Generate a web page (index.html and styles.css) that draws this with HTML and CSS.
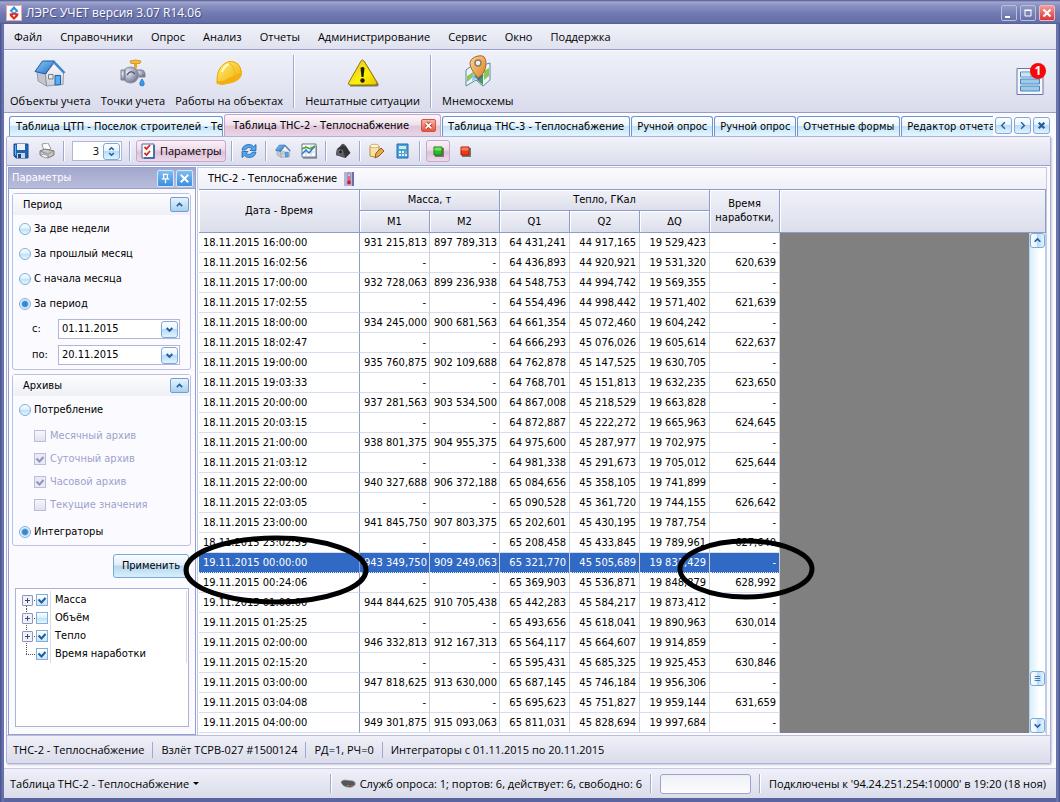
FILE: index.html
```html
<!DOCTYPE html>
<html lang="ru">
<head>
  <meta charset="UTF-8" />
  <meta name="viewport" content="width=device-width, initial-scale=1.0"/>
  <title>ЛЭРС УЧЕТ</title>
  <link rel="stylesheet" href="styles.css">
</head>
<body>
  <svg width="0" height="0" class="defs" aria-hidden="true">
    <defs>
      <linearGradient id="gBlue" x1="0" y1="0" x2="1" y2="1"><stop offset="0" stop-color="#8cc8f6"/><stop offset="1" stop-color="#1f6fc6"/></linearGradient>
      <linearGradient id="gWall" x1="0" y1="0" x2="0" y2="1"><stop offset="0" stop-color="#ffffff"/><stop offset="1" stop-color="#c9ccd3"/></linearGradient>
      <linearGradient id="gYellow" x1="0" y1="0" x2="1" y2="1"><stop offset="0" stop-color="#fff27a"/><stop offset="1" stop-color="#f2a900"/></linearGradient>
      <linearGradient id="gWarn" x1="0" y1="0" x2="1" y2="1"><stop offset="0" stop-color="#e0b93c"/><stop offset="0.6" stop-color="#fff200"/><stop offset="1" stop-color="#e5c000"/></linearGradient>
      <radialGradient id="gMetal" cx="0.35" cy="0.35" r="0.7"><stop offset="0" stop-color="#eef0f8"/><stop offset="1" stop-color="#6f7591"/></radialGradient>
      <linearGradient id="gPin" x1="0" y1="0" x2="1" y2="1"><stop offset="0" stop-color="#ffd79a"/><stop offset="1" stop-color="#d9831f"/></linearGradient>
      <symbol id="house" viewBox="0 0 32 28">
        <path d="M3 12 11.500 14 12.500 27 4 22z" fill="#c3c6ce" stroke="#888c96" stroke-width="0.800"/>
        <path d="M11.500 15 20 4.500 29.500 14 29 25.500 12.500 27z" fill="url(#gWall)" stroke="#888c96" stroke-width="0.800"/>
        <path d="M1 12.500 8.500 2 20.500 2 11.500 15z" fill="url(#gBlue)" stroke="#1c5ca6"/>
        <path d="M20 3 30.500 14" fill="none" stroke="#3c86cf" stroke-width="2.500"/>
        <path d="M14.500 15.500h4.500v4.500h-4.500z" fill="#e9eaec" stroke="#7b7e85"/>
        <path d="M21 16.500h5.500v9L21 26z" fill="#5aadf2" stroke="#1b62b0"/>
      </symbol>
    </defs>
  </svg>

  <div class="window">
    <header class="titlebar">
      <svg class="app-icon" viewBox="0 0 16 16"><rect width="16" height="16" fill="#fff"/><path d="M8 1 12.500 6 8 9 3.500 6z" fill="#2b93e6"/><path d="M3.500 8.500 8 8l4.500.500L12 11 8 15 4 11z" fill="#dc2a1c"/><path d="M6 6l2-1.500L10 6 8 7.500zM6.500 10.500 8 9.500l1.500 1L8 12z" fill="#fff"/><path d="M.5.5h15v15H.5z" fill="none" stroke="#f0a5a0"/></svg>
      <h1>ЛЭРС УЧЕТ версия 3.07 R14.06</h1>
      <div class="win-buttons">
        <button aria-label="Свернуть"><svg viewBox="0 0 14 14"><path d="M3 10h5v2H3z" fill="#fff"/></svg></button>
        <button aria-label="Развернуть"><svg viewBox="0 0 14 14"><path d="M4 4.500h6V10H4z" fill="none" stroke="#fff"/><path d="M3.500 3.500h7v1.500h-7z" fill="#fff"/></svg></button>
        <button class="close" aria-label="Закрыть"><svg viewBox="0 0 14 14"><path d="M3.500 3.500l7 7M10.500 3.500l-7 7" stroke="#fff" stroke-width="2.200"/></svg></button>
      </div>
    </header>

    <div class="client">
      <nav class="menubar">
        <button>Файл</button>
        <button>Справочники</button>
        <button>Опрос</button>
        <button>Анализ</button>
        <button>Отчеты</button>
        <button>Администрирование</button>
        <button>Сервис</button>
        <button>Окно</button>
        <button>Поддержка</button>
      </nav>

      <div class="toolbar">
        <button><svg width="32" height="28"><use href="#house"/></svg>Объекты учета</button>
        <button>
          <svg width="32" height="28" viewBox="0 0 32 28"><path d="M13 2q5.500-2 11 0l-1 2.500h-9z" fill="#f7b940" stroke="#d08a1a" stroke-width="0.800"/><path d="M17 4.500h3v5h-3z" fill="#e9a52c"/><path d="M16 11h8q4 0 4 5v2h-6v-2h-6z" fill="url(#gMetal)" stroke="#7d829c"/><circle cx="13.500" cy="16" r="8" fill="url(#gMetal)" stroke="#8a8fab"/><path d="M4 11h4v10H4z" fill="url(#gMetal)" stroke="#7d829c"/><path d="M10 16q4-6 8-1" fill="none" stroke="#5a5f7c" stroke-width="1.500"/><path d="M25 20q3 4 2 6-2 2-4 0-1-2 2-6z" fill="#38a0f0" stroke="#1b6fc9" stroke-width="0.800"/></svg>
          Точки учета</button>
        <button>
          <svg width="32" height="28" viewBox="0 0 32 28"><path d="M4 19Q5 6 16 2.500q11-1 12.500 11l-1 4-14 7q-6 2-9-1z" fill="url(#gYellow)" stroke="#e9a700"/><path d="M3 22q6 1 11-2t13-6l2 2q-3 6-10 8T4 25z" fill="#f5ae12"/><path d="M15 4q7 2 7 12" fill="none" stroke="#f3b80e"/><path d="M9 13q2-6 7-8" fill="none" stroke="#fffbcf" stroke-width="2"/></svg>
          Работы на объектах</button>
        <span class="sep"></span>
        <button>
          <svg width="32" height="28" viewBox="0 0 32 28"><path d="M3 26.500 15 3q1.500-2 3 0l13.500 22q.500 2.500-2 2.500H4q-2 0-1-1z" fill="#75776d"/><path d="M1.500 24 14 2q1.500-2 3 0L30 23.500q0 2.500-2 2.500H3.500q-2.500 0-2-2z" fill="url(#gWarn)" stroke="#96760c"/><path d="M13.500 9q2-2 4 0l-1 9h-2z" fill="#1d1d14"/><circle cx="15.500" cy="21.500" r="2.200" fill="#1d1d14"/></svg>
          Нештатные ситуации</button>
        <span class="sep"></span>
        <button>
          <svg width="32" height="32" viewBox="0 0 32 32"><path d="M4 15 11 10 16 14 21 10 28 8V25L21 31 14 25 4 31z" fill="#eef5fa" stroke="#5b88ad"/><path d="M5 21l6-4v5l-6 5zM22 16l5-3v8l-5 4z" fill="#8cc657"/><path d="M11 18l5 2v6l-2-2-4 2z" fill="#8dc8ed"/><path d="M16 22l5-4v12l-6-5z" fill="#4b9a51"/><path d="M12 21l5 4 5-5" fill="#356fa3"/><path d="M16 23Q8 14 8 8.500T16 1t8 7.500T16 23z" fill="url(#gPin)" stroke="#a9672a"/><circle cx="16" cy="8" r="3" fill="#eef1f6" stroke="#8c7c65" stroke-width="1.500"/></svg>
          Мнемосхемы</button>
        <button class="notify" aria-label="Уведомления">
          <svg width="30" height="30" viewBox="0 0 30 30"><path d="M2 1.500h26v26H2z" fill="#f6f7fc" stroke="#6a76ad"/><path d="M5.500 5h19v5h-19zM5.500 12h19v5h-19zM5.500 19h19v5h-19z" fill="#9ccbe9" stroke="#4684c0"/><path d="M6 5.500h9v4H6z" fill="#c5e4f4"/></svg>
          <span class="badge">1</span>
        </button>
      </div>

      <div class="tabs">
        <div class="tab-list" role="tablist">
          <button class="tab cut" role="tab">Таблица ЦТП - Поселок строителей - Те</button>
          <div class="tab active"><button role="tab" aria-selected="true">Таблица ТНС-2 - Теплоснабжение</button><button class="tab-close" aria-label="Закрыть вкладку"><svg viewBox="0 0 14 12"><path d="M4 3l6 6M10 3l-6 6" stroke="#c33a2c" stroke-width="4"/><path d="M4 3l6 6M10 3l-6 6" stroke="#fff" stroke-width="2"/></svg></button></div>
          <button class="tab" role="tab">Таблица ТНС-3 - Теплоснабжение</button>
          <button class="tab" role="tab">Ручной опрос</button>
          <button class="tab" role="tab">Ручной опрос</button>
          <button class="tab" role="tab">Отчетные формы</button>
          <button class="tab" role="tab">Редактор отчета</button>
        </div>
        <button class="glass" aria-label="Назад"><svg viewBox="0 0 16 16"><path d="M9.500 4.500 6 8l3.500 3.500"/></svg></button>
        <button class="glass" aria-label="Вперед"><svg viewBox="0 0 16 16"><path d="M6.500 4.500 10 8l-3.500 3.500"/></svg></button>
        <button class="glass" aria-label="Закрыть"><svg viewBox="0 0 16 16"><path d="M5 5l6 6M11 5l-6 6" stroke-width="2.400"/></svg></button>
      </div>

      <main class="page">
        <div class="strip">
          <button class="tool" aria-label="Сохранить"><svg viewBox="0 0 16 16"><path d="M1 1h14v14H3l-2-2z" fill="#1e62b4" stroke="#164b8c"/><path d="M4 1h8v6H4z" fill="#e9f0f8"/><path d="M4 10h8v5H4z" fill="#ccd6e2"/><path d="M5 11h3v4H5z" fill="#1b4379"/><path d="M2 2h1v10H2z" fill="#6db0ec"/></svg></button>
          <button class="tool" aria-label="Печать"><svg viewBox="0 0 16 16"><path d="M3 1l6-1 3 6-7 2z" fill="#fff" stroke="#9a9a9a"/><path d="M1 8l5-2 9 2v4l-6 3-8-3z" fill="#c7c8cc" stroke="#77787d"/><path d="M1 8l8 3 6-3" fill="none" stroke="#8d8e93"/><path d="M4 11l6 2-3 2-5-2z" fill="#f9f9ef" stroke="#999"/><circle cx="13" cy="10" r="1" fill="#e5be30"/></svg></button>
          <span class="sep"></span>
          <div class="spin"><input type="text" value="3" aria-label="Знаков после запятой"><button class="glass" aria-label="Изменить"><svg viewBox="0 0 16 16"><path d="M5.500 6.500 8 4l2.500 2.500M5.500 9.500 8 12l2.500-2.500"/></svg></button></div>
          <span class="sep"></span>
          <button class="tool checked"><svg viewBox="0 0 16 16"><path d="M2 1h12v14H2z" fill="#fbfbfb" stroke="#4c6d9d"/><path d="M14 2v13H4" fill="none" stroke="#2a5f9e" stroke-width="1.500"/><path d="M4.500 4l2 2L10 2M4.500 10l2 2L10 8" fill="none" stroke="#d42a20" stroke-width="1.800"/></svg>Параметры</button>
          <span class="sep"></span>
          <button class="tool" aria-label="Обновить"><svg viewBox="0 0 16 16"><path d="M1 7Q2 1.500 8 1.500q3 0 4.500 2L15 1.500V7.500H9L11 5.500Q7 3 4.500 7z" fill="#54a6ec" stroke="#1e62ae" stroke-width="0.800"/><path d="M15 9q-1 5.500-7 5.500-3 0-4.500-2L1 14.500V8.500h6L5 10.500q4 2.500 6.500-1.500z" fill="#54a6ec" stroke="#1e62ae" stroke-width="0.800"/></svg></button>
          <span class="sep"></span>
          <button class="tool" aria-label="Объект"><svg viewBox="0 0 32 28"><use href="#house" width="32" height="28"/></svg></button>
          <button class="tool" aria-label="График"><svg viewBox="0 0 16 16"><path d="M1 1h14v13H1z" fill="#fff" stroke="#64748b"/><path d="M1 5h14M1 9h14M5 1v13M10 1v13" stroke="#c5ccd7"/><path d="M1 11l4-4 3 3 6-7" fill="none" stroke="#2a77cf" stroke-width="1.500"/><path d="M1 6l4-2 4 2 5-3" fill="none" stroke="#49a52e" stroke-width="1.500"/><path d="M2 15h14V3" fill="none" stroke="#555d69"/></svg></button>
          <span class="sep"></span>
          <button class="tool" aria-label="Прибор"><svg viewBox="0 0 16 16"><path d="M2 6 8 1l3 2 4.500 7-5 5L1 12z" fill="#333438"/><path d="M2 6l6 1 2.500 8L1 12z" fill="#595b60"/><circle cx="5.500" cy="9" r="2" fill="#1e1f21" stroke="#8b8d91" stroke-width="0.700"/><path d="M6 3q2-3 4 0" fill="none" stroke="#5b5c60" stroke-width="1.500"/></svg></button>
          <span class="sep"></span>
          <button class="tool" aria-label="Правка"><svg viewBox="0 0 16 16"><path d="M1 3q4-3 9 0v10q-4 2-9 0z" fill="#fae2a7" stroke="#bf8b38"/><ellipse cx="5.500" cy="3" rx="4.500" ry="1.800" fill="#fff6df" stroke="#cba05b" stroke-width="0.700"/><path d="M7 10l5-5 3 3-5 5-4 2z" fill="#e9a94a" stroke="#8d5c20"/></svg></button>
          <button class="tool" aria-label="Расчет"><svg viewBox="0 0 16 16"><path d="M2 1h11v14H2z" fill="#49a1e6" stroke="#1e6db4"/><path d="M4 3h7v3H4z" fill="#c9f0d2"/><path d="M4 8h2v2H4zM7 8h2v2H7zM4 11h2v2H4zM7 11h2v2H7zM10 11h2v2h-2z" fill="#e9f5fd"/><path d="M10 8h2v2h-2z" fill="#f18b3b"/></svg></button>
          <span class="sep"></span>
          <button class="tool checked" aria-label="Пуск"><svg viewBox="0 0 16 16"><path d="M5 5h9v9H5z" fill="#777"/><path d="M4 4h8v8H4z" fill="#2ebc25" stroke="#14760e"/><path d="M4.500 4.500h7v3h-7z" fill="#6fe05c"/></svg></button>
          <button class="tool" aria-label="Стоп"><svg viewBox="0 0 16 16"><path d="M5 5h9v9H5z" fill="#777"/><path d="M4 4h8v8H4z" fill="#ee3a15" stroke="#a81f07"/><path d="M4.500 4.500h7v3h-7z" fill="#fc7a57"/></svg></button>
        </div>

        <div class="work">
          <aside class="params">
            <div class="params-head">
              <h2>Параметры</h2>
              <button aria-label="Закрепить"><svg viewBox="0 0 16 16"><path d="M5 3.500h6M6 3.500v5M10 3.500v5M4 8.500h8M8 9v4" stroke="#fff" stroke-width="1.300" fill="none"/></svg></button>
              <button aria-label="Скрыть"><svg viewBox="0 0 16 16"><path d="M4 4l8 8M12 4l-8 8" stroke="#fff" stroke-width="2"/></svg></button>
            </div>

            <section class="group">
              <div class="group-head"><h3>Период</h3><button class="fold" aria-label="Свернуть"><svg viewBox="0 0 16 12"><path d="M5.500 7.500 8 5l2.500 2.500"/></svg></button></div>
              <div class="options">
                <label><input type="radio" name="period">За две недели</label>
                <label><input type="radio" name="period">За прошлый месяц</label>
                <label><input type="radio" name="period">С начала месяца</label>
                <label><input type="radio" name="period" checked>За период</label>
              </div>
              <div class="date-row"><label for="from">с:</label><div class="combo"><input type="text" id="from" value="01.11.2015"><button class="glass" aria-label="Выбрать дату"><svg viewBox="0 0 16 16"><path d="M5 6.500 8 9.500l3-3" stroke-width="2.200"/></svg></button></div></div>
              <div class="date-row"><label for="to">по:</label><div class="combo"><input type="text" id="to" value="20.11.2015"><button class="glass" aria-label="Выбрать дату"><svg viewBox="0 0 16 16"><path d="M5 6.500 8 9.500l3-3" stroke-width="2.200"/></svg></button></div></div>
            </section>

            <section class="group">
              <div class="group-head"><h3>Архивы</h3><button class="fold" aria-label="Свернуть"><svg viewBox="0 0 16 12"><path d="M5.500 7.500 8 5l2.500 2.500"/></svg></button></div>
              <div class="options"><label><input type="radio" name="arch">Потребление</label></div>
              <div class="options nested">
                <label><input type="checkbox" disabled>Месячный архив</label>
                <label><input type="checkbox" disabled checked>Суточный архив</label>
                <label><input type="checkbox" disabled checked>Часовой архив</label>
                <label><input type="checkbox" disabled>Текущие значения</label>
              </div>
              <div class="options"><label><input type="radio" name="arch" checked>Интеграторы</label></div>
            </section>

            <button class="apply">Применить</button>

            <ul class="tree">
              <li><i class="plus"></i><label><input type="checkbox" checked><span>Масса</span></label></li>
              <li><i class="plus"></i><label><input type="checkbox"><span>Объём</span></label></li>
              <li><i class="plus"></i><label><input type="checkbox" checked><span>Тепло</span></label></li>
              <li><i></i><label><input type="checkbox" checked><span>Время наработки</span></label></li>
            </ul>
          </aside>

          <section class="data">
            <div class="data-head">ТНС-2 - Теплоснабжение
              <svg width="12" height="14" viewBox="0 0 12 14"><path d="M1 0h10v14H1z" fill="#b3b5dc"/><path d="M9 0h2v14H9z" fill="#6a6fa8"/><path d="M5 1h2v8H5z" fill="#fff" stroke="#8b3550" stroke-width="0.600"/><path d="M5.500 4h1v6h-1z" fill="#d2202b"/><circle cx="6" cy="10.500" r="2" fill="#d2202b"/></svg>
            </div>
            <div class="grid">
              <table>
                <colgroup><col class="c-date"><col class="c-num" span="6"><col></colgroup>
                <thead>
                  <tr><th rowspan="2">Дата - Время</th><th colspan="2">Масса, т</th><th colspan="3">Тепло, ГКал</th><th rowspan="2">Время наработки,</th><th rowspan="2"></th></tr>
                  <tr><th>M1</th><th>M2</th><th>Q1</th><th>Q2</th><th>ΔQ</th></tr>
                </thead>
                <tbody id="rows"></tbody>
              </table>
              <div class="scroll">
                <button class="glass" aria-label="Вверх"><svg viewBox="0 0 16 16"><path d="M4.500 9.500 8 6l3.500 3.500" stroke-width="2"/></svg></button>
                <span class="track"></span>
                <button class="glass thumb" aria-label="Прокрутка"><svg viewBox="0 0 16 16"><path d="M4.500 5.500h7M4.500 8h7M4.500 10.500h7" stroke-width="1"/></svg></button>
                <span class="track short"></span>
                <button class="glass" aria-label="Вниз"><svg viewBox="0 0 16 16"><path d="M4.500 6.500 8 10l3.500-3.500" stroke-width="2"/></svg></button>
              </div>
            </div>
          </section>
        </div>

        <div class="page-status">
          <span>ТНС-2 - Теплоснабжение</span>
          <span>Взлёт ТСРВ-027 #1500124</span>
          <span>РД=1, РЧ=0</span>
          <span>Интеграторы с 01.11.2015 по 20.11.2015</span>
        </div>
      </main>

      <footer class="statusbar">
        <button class="current">Таблица ТНС-2 - Теплоснабжение<i class="caret"></i></button>
        <span class="sep"></span>
        <span class="poll"><svg width="16" height="10" viewBox="0 0 16 10"><path d="M1 3q1-2 4-2l8 1q3 1 2 4l-3 2q-7 1-10-3z" fill="#55575a" stroke="#8f9194" stroke-width="0.700"/><circle cx="8" cy="6.500" r="0.800" fill="#3fd53a"/><path d="M10 6h3v1h-3z" fill="#e0412d"/></svg>Служб опроса: 1; портов: 6, действует: 6, свободно: 6</span>
        <span class="sep"></span>
        <span class="progress"></span>
        <span class="sep"></span>
        <span class="conn">Подключены к '94.24.251.254:10000' в 19:20 (18 ноя)</span>
      </footer>
    </div>

    <svg class="marks" width="640" height="80" viewBox="0 0 640 80" aria-hidden="true">
      <ellipse cx="96" cy="40" rx="90" ry="32"/>
      <ellipse cx="566" cy="39" rx="66" ry="28"/>
    </svg>
  </div>

  <script>
    const selected = 16;
    const data = [
      ["18.11.2015 16:00:00", "931 215,813", "897 789,313", "64 431,241", "44 917,165", "19 529,423", "-"],
      ["18.11.2015 16:02:56", "-", "-", "64 436,893", "44 920,921", "19 531,320", "620,639"],
      ["18.11.2015 17:00:00", "932 728,063", "899 236,938", "64 548,753", "44 994,742", "19 569,355", "-"],
      ["18.11.2015 17:02:55", "-", "-", "64 554,496", "44 998,442", "19 571,402", "621,639"],
      ["18.11.2015 18:00:00", "934 245,000", "900 681,563", "64 661,354", "45 072,460", "19 604,242", "-"],
      ["18.11.2015 18:02:47", "-", "-", "64 666,293", "45 076,026", "19 605,614", "622,637"],
      ["18.11.2015 19:00:00", "935 760,875", "902 109,688", "64 762,878", "45 147,525", "19 630,705", "-"],
      ["18.11.2015 19:03:33", "-", "-", "64 768,701", "45 151,813", "19 632,235", "623,650"],
      ["18.11.2015 20:00:00", "937 281,563", "903 534,500", "64 867,008", "45 218,529", "19 663,828", "-"],
      ["18.11.2015 20:03:15", "-", "-", "64 872,887", "45 222,272", "19 665,963", "624,645"],
      ["18.11.2015 21:00:00", "938 801,375", "904 955,375", "64 975,600", "45 287,977", "19 702,975", "-"],
      ["18.11.2015 21:03:12", "-", "-", "64 981,338", "45 291,673", "19 705,012", "625,644"],
      ["18.11.2015 22:00:00", "940 327,688", "906 372,188", "65 084,656", "45 358,105", "19 741,899", "-"],
      ["18.11.2015 22:03:05", "-", "-", "65 090,528", "45 361,720", "19 744,155", "626,642"],
      ["18.11.2015 23:00:00", "941 845,750", "907 803,375", "65 202,601", "45 430,195", "19 787,754", "-"],
      ["18.11.2015 23:02:59", "-", "-", "65 208,458", "45 433,845", "19 789,961", "627,640"],
      ["19.11.2015 00:00:00", "943 349,750", "909 249,063", "65 321,770", "45 505,689", "19 831,429", "-"],
      ["19.11.2015 00:24:06", "-", "-", "65 369,903", "45 536,871", "19 848,879", "628,992"],
      ["19.11.2015 01:00:00", "944 844,625", "910 705,438", "65 442,283", "45 584,217", "19 873,412", "-"],
      ["19.11.2015 01:25:25", "-", "-", "65 493,656", "45 618,041", "19 890,963", "630,014"],
      ["19.11.2015 02:00:00", "946 332,813", "912 167,313", "65 564,117", "45 664,607", "19 914,859", "-"],
      ["19.11.2015 02:15:20", "-", "-", "65 595,431", "45 685,325", "19 925,453", "630,846"],
      ["19.11.2015 03:00:00", "947 818,625", "913 630,000", "65 687,145", "45 746,184", "19 956,306", "-"],
      ["19.11.2015 03:04:08", "-", "-", "65 695,623", "45 751,827", "19 959,144", "631,659"],
      ["19.11.2015 04:00:00", "949 301,875", "915 093,063", "65 811,031", "45 828,694", "19 997,684", "-"]
    ];

    const tbody = document.getElementById("rows");
    data.forEach((row, i) => {
      const tr = document.createElement("tr");
      if (i === selected) tr.className = "selected";
      row.forEach(text => {
        const td = document.createElement("td");
        td.textContent = text;
        tr.appendChild(td);
      });
      if (i === 0) {
        const rest = document.createElement("td");
        rest.className = "rest";
        rest.rowSpan = data.length;
        tr.appendChild(rest);
      }
      tbody.appendChild(tr);
    });
  </script>
</body>
</html>
```
FILE: styles.css
```css
* {
  box-sizing: border-box;
  padding: 0;
  margin: 0;
}

body {
  font: 11px/14px "DejaVu Sans Condensed", "DejaVu Sans", sans-serif;
  color: #000;
  background: #5a679f;
}

button, input {
  font: inherit;
  color: inherit;
  border: none;
  background: none;
}

h1, h2, h3 {
  font-size: inherit;
  font-weight: normal;
}

.defs {
  position: absolute;
}

.window {
  position: relative;
  display: flex;
  flex-direction: column;
  min-height: 100vh;
  padding: 0 4px 4px;
  background: linear-gradient(90deg, #46508a, #6f7bb4 3px, #5a659f 4px, #5a659f calc(100% - 4px), #7480b8 calc(100% - 3px), #46508a);
}

/* title */

.titlebar {
  display: flex;
  align-items: center;
  height: 24px;
  margin: 0 -4px;
  padding: 2px 5px 0 6px;
  gap: 4px;
  background: linear-gradient(#4b558f, #a3a8d0 2px, #8c92c2 5px, #7079b0 14px, #6570a8 22px, #515c98);
}

.titlebar h1 {
  flex: 1;
  color: #fff;
  font: 12px/16px "Open Sans", sans-serif;
  text-shadow: 1px 1px 1px #3d477d;
}

.app-icon {
  width: 16px;
  height: 16px;
}

.win-buttons {
  display: flex;
  gap: 3px;
}

.win-buttons button {
  width: 16px;
  height: 16px;
  border: 1px solid #b9bede;
  border-radius: 2px;
  background: linear-gradient(#9299c6, #6570a8);
}

.win-buttons .close {
  border-color: #f3b7bb;
  background: linear-gradient(#f59a9a, #dd3434);
}

.win-buttons svg {
  display: block;
}

.client {
  flex: 1;
  display: flex;
  flex-direction: column;
  background: #fbfafe;
}

/* menu and main toolbar */

.menubar, .toolbar, .strip, .page-status, .statusbar {
  font: 11px/16px "Open Sans", "Noto Sans", sans-serif;
}

.menubar {
  display: flex;
  align-items: center;
  height: 26px;
  padding: 0 10px;
  gap: 18px;
  background: linear-gradient(#f1f2f9, #dfe1ee);
  border-bottom: 1px solid #949fcb;
}

.toolbar {
  display: flex;
  align-items: center;
  height: 62px;
  margin-top: 1px;
  padding: 0 11px 0 6px;
  gap: 10px;
  background: linear-gradient(#eff1f9, #dadcec);
  border-bottom: 1px solid #949fcb;
}

.toolbar > button {
  display: flex;
  flex-direction: column;
  align-items: center;
  justify-content: flex-end;
  height: 54px;
  gap: 6px;
}

.sep {
  width: 2px;
  align-self: stretch;
  margin: 4px 0;
  border-left: 1px solid #a0a8d2;
  border-right: 1px solid #fff;
}

.toolbar .notify {
  position: relative;
  justify-content: center;
  margin-left: auto;
}

.badge {
  position: absolute;
  top: 8px;
  right: -1px;
  width: 16px;
  height: 16px;
  border-radius: 50%;
  background: #f60808;
  color: #fff;
  font-size: 12px;
  font-weight: bold;
}

/* tabs */

.tabs {
  display: flex;
  align-items: center;
  height: 22px;
  margin: 1px 6px 0 5px;
  gap: 2px;
}

.tab-list {
  flex: 1;
  display: flex;
  align-items: flex-end;
  align-self: stretch;
  overflow: hidden;
  gap: 1px;
}

.tab {
  flex: none;
  height: 20px;
  padding: 0 5px;
  white-space: nowrap;
  border: 1px solid #6d94cc;
  border-bottom: none;
  border-radius: 3px 3px 0 0;
  background: linear-gradient(#fff, #eaf5fd 45%, #c4e2f8 50%, #e4f8ff);
}

.tab.cut {
  width: 214px;
  padding: 0 6px;
  overflow: hidden;
  text-align: left;
}

.tab.active {
  display: flex;
  align-items: center;
  height: 22px;
  padding: 0 4px 0 8px;
  gap: 12px;
  border-color: #c6a3c8;
  background: linear-gradient(#fdf6fa, #f0e1ec 45%, #e0c6da 55%, #ead5e4);
}

.tab-close {
  width: 15px;
  height: 13px;
  border: 1px solid #c9584a;
  border-radius: 2px;
  background: linear-gradient(#fab5a3, #e7543f);
}

.tab-close svg {
  display: block;
}

.glass {
  flex: none;
  width: 17px;
  height: 17px;
  border: 1px solid #7ea9d8;
  border-radius: 3px;
  background: linear-gradient(#fdfeff, #e6f3fd 45%, #b9dcf6 50%, #dff3ff);
}

.glass svg, .fold svg {
  display: block;
  width: 100%;
  height: 100%;
  fill: none;
  stroke: #235d9f;
  stroke-width: 1.5;
}

/* page */

.page {
  flex: 1;
  display: flex;
  flex-direction: column;
  margin: 0 5px 4px 2px;
  border: 1px solid #adb2da;
  border-radius: 2px;
  box-shadow: 1px 1px 2px #c9c9d6;
}

.strip {
  display: flex;
  align-items: center;
  height: 29px;
  padding: 0 3px;
  gap: 4px;
  background: linear-gradient(#f1f2f9, #dbdded);
  border-bottom: 1px solid #9aa4ce;
}

.strip .sep {
  margin: 4px 1px;
}

.tool {
  display: flex;
  align-items: center;
  height: 22px;
  padding: 0 3px;
  gap: 4px;
}

.tool svg {
  width: 16px;
  height: 16px;
}

.tool.checked {
  border: 1px solid #c9a6cb;
  border-radius: 3px;
  background: linear-gradient(#fbf1f8, #eedbe8 45%, #dcbfd7 55%, #ecdae8);
}

.spin, .combo {
  display: flex;
  align-items: center;
  height: 20px;
  padding: 1px;
  background: #fff;
  border: 1px solid #b1b6d9;
}

.spin {
  width: 50px;
  margin: 0 2px;
}

.spin input, .combo input {
  flex: 1;
  min-width: 0;
  padding: 0 4px 0 2px;
}

.spin input {
  text-align: right;
}

.work {
  flex: 1;
  display: flex;
  padding: 1px 3px 0 1px;
  gap: 1px;
}

/* left pane */

.params {
  display: flex;
  flex-direction: column;
  flex: none;
  width: 188px;
  border: 1px solid #949fcb;
}

.params-head {
  display: flex;
  align-items: center;
  height: 21px;
  padding: 0 2px 0 3px;
  gap: 2px;
  color: #fff;
  background: linear-gradient(#a2a7cf, #b9bddb);
  border-bottom: 1px solid #949fcb;
}

.params-head h2 {
  flex: 1;
}

.params-head button {
  width: 17px;
  height: 17px;
  border: 1px solid #d2e8fa;
  border-radius: 2px;
  background: linear-gradient(#7ebcf2, #3d8fdf);
}

.params-head svg {
  display: block;
}

.group {
  margin: 4px 4px 0 3px;
  padding-bottom: 1px;
  border: 1px solid #bcc1e0;
  border-radius: 3px;
}

.group-head {
  display: flex;
  align-items: center;
  height: 21px;
  padding: 0 1px 0 10px;
  background: linear-gradient(#fdfdff, #eff0f7);
}

.group-head h3 {
  flex: 1;
}

.fold {
  width: 19px;
  height: 15px;
  border: 1px solid #6f9fd0;
  border-radius: 2px;
  background: linear-gradient(#e6f3fc, #a9d0ee);
}

.options {
  padding: 1px 6px 0;
}

.options label {
  display: flex;
  align-items: center;
  height: 25px;
  gap: 3px;
}

.options.nested {
  padding: 2px 21px;
  color: #9ba3cd;
}

.nested label {
  height: 23px;
  gap: 4px;
}

input[type="radio"], input[type="checkbox"] {
  appearance: none;
  flex: none;
  width: 12px;
  height: 12px;
  border: 1px solid #7fb0dd;
  background: linear-gradient(#fff, #d9eefb 50%, #bfe2f8 55%, #e5f7ff);
}

input[type="radio"] {
  border-radius: 50%;
}

input[type="radio"]:checked {
  background: radial-gradient(#3a86cc 2px, #5fa3de 3px, #e3f3fd 4px);
}

input[type="checkbox"]:checked {
  background: url('data:image/svg+xml,<svg xmlns="http://www.w3.org/2000/svg" viewBox="0 0 10 10"><path d="M1.500 4.500 4.500 7.500 8.500 3" fill="none" stroke="%23205c9e" stroke-width="2"/></svg>'), linear-gradient(#fff, #c9e6f9);
}

input[type="checkbox"]:disabled {
  border-color: #b9bedd;
  background: linear-gradient(#f6f6fb, #e0e1ee);
}

input[type="checkbox"]:disabled:checked {
  background: url('data:image/svg+xml,<svg xmlns="http://www.w3.org/2000/svg" viewBox="0 0 10 10"><path d="M1.500 4.500 4.500 7.500 8.500 3" fill="none" stroke="%238d95c2" stroke-width="2"/></svg>'), #e9eaf4;
}

.date-row {
  display: flex;
  align-items: center;
  height: 26px;
  padding: 0 10px 0 19px;
}

.date-row label {
  flex: none;
  width: 26px;
}

.combo {
  flex: 1;
  min-width: 0;
}

.apply {
  align-self: flex-end;
  width: 76px;
  height: 24px;
  margin: 8px 6px 10px 0;
  border: 1px solid #7ba7d3;
  border-radius: 3px;
  background: linear-gradient(#fbfdff, #dfeefa 45%, #b5d6ef 50%, #d8f0fd);
}

.tree {
  flex: 1;
  margin: 0 6px 7px;
  padding: 2px 1px;
  list-style: none;
  background: #fff;
  border: 1px solid #adb2da;
}

.tree li {
  display: flex;
  align-items: center;
  height: 18px;
  padding-left: 4px;
  border-right: 1px solid #d8dbf0;
}

.tree i {
  display: flex;
  align-items: center;
  width: 15px;
  height: 18px;
  background:
    linear-gradient(90deg, #555 50%, transparent 0) 5px 9px / 2px 1px repeat-x,
    linear-gradient(#555 50%, transparent 0) 5px 0 / 1px 2px repeat-y;
}

.tree li:first-child i, .tree li:last-child i {
  background:
    repeating-linear-gradient(90deg, #555 0 1px, transparent 1px 2px) 5px 9px / 10px 1px no-repeat,
    repeating-linear-gradient(#555 0 1px, transparent 1px 2px) 5px 0 / 1px 9px no-repeat;
}

.tree li:first-child i {
  background-position: 5px 9px, 5px 9px;
}

.tree i.plus::before {
  content: "";
  width: 9px;
  height: 9px;
  margin-left: 1px;
  border: 1px solid #8c95c0;
  border-radius: 1px;
  background:
    linear-gradient(#3d477d, #3d477d) center / 5px 1px no-repeat,
    linear-gradient(#3d477d, #3d477d) center / 1px 5px no-repeat,
    #f1f2f9;
}

.tree label {
  display: flex;
  align-items: center;
}

.tree span {
  margin-left: 2px;
  padding-left: 4px;
  line-height: 18px;
  border-left: 1px solid #d8dbf0;
}

/* table */

.data {
  flex: 1;
  min-width: 0;
  border: 1px solid #c3c8e3;
  border-bottom: none;
}

.data-head {
  display: flex;
  align-items: center;
  height: 21px;
  padding-left: 10px;
  gap: 6px;
  background: linear-gradient(#fbfbfe, #eff0f7);
}

.grid {
  position: relative;
}

table {
  width: 100%;
  table-layout: fixed;
  border-collapse: separate;
  border-spacing: 0;
  border-left: 1px solid #fff;
}

.c-date {
  width: 161px;
}

.c-num {
  width: 70px;
}

th {
  height: 21px;
  font-weight: normal;
  background: linear-gradient(#f1f2f8, #dcdeeb);
  border: 1px solid #8f9bc9;
  border-width: 1px 1px 0 0;
  box-shadow: inset 1px 1px #fff;
}

thead tr:last-child th, th[rowspan] {
  height: 23px;
  border-bottom-width: 1px;
}

td {
  height: 20px;
  padding: 0 3px 0 4px;
  text-align: right;
  line-height: 14px;
  white-space: nowrap;
  background: #fff;
  border-right: 1px solid #cfcfd6;
  border-bottom: 1px solid #d9dbf1;
}

td:first-child {
  text-align: left;
  border-right-color: #8f9bc9;
}

.rest {
  background: #808080;
  border: none;
}

.selected td:not(.rest) {
  color: #fff;
  background: #316ac5;
  border-bottom: 1px dotted #dfe6f8;
}

.scroll {
  position: absolute;
  top: 44px;
  right: 0;
  bottom: 0;
  width: 17px;
  display: flex;
  flex-direction: column;
  background: linear-gradient(90deg, #d7eefb, #fff 60%);
  border: 1px solid #b4d3ec;
  border-width: 0 1px;
}

.scroll .glass {
  width: 15px;
  height: 15px;
  background: linear-gradient(90deg, #fdfeff, #e6f3fd 45%, #b9dcf6 50%, #dff3ff);
}

.track {
  flex: 13;
}

.track.short {
  flex: 1;
}

/* status lines */

.page-status {
  display: flex;
  align-items: center;
  height: 28px;
  padding-left: 6px;
  background: linear-gradient(#eff0f8, #dadcea);
  border-top: 1px solid #b9bedd;
}

.page-status span {
  padding-right: 8px;
}

.page-status span + span {
  padding-left: 8px;
  border-left: 1px solid #a0a8d2;
}

.statusbar {
  display: flex;
  align-items: center;
  height: 30px;
  padding: 0 10px 0 6px;
  gap: 8px;
  background: linear-gradient(#eff0f8, #dadcea);
  border-top: 1px solid #c6cae4;
}

.statusbar .sep {
  margin: 5px 0;
}

.current {
  flex: 1;
  display: flex;
  align-items: center;
  gap: 4px;
}

.caret {
  border: 3px solid transparent;
  border-top-color: #000;
  border-bottom: none;
}

.poll {
  display: flex;
  align-items: center;
  gap: 4px;
}

.progress {
  width: 91px;
  height: 20px;
  border: 1px solid #9aa4ce;
  border-radius: 3px;
  background: linear-gradient(#eff0f6, #fdfdff);
}

.marks {
  position: absolute;
  top: 530px;
  left: 180px;
  pointer-events: none;
  fill: none;
  stroke: #000;
  stroke-width: 5;
}
```
